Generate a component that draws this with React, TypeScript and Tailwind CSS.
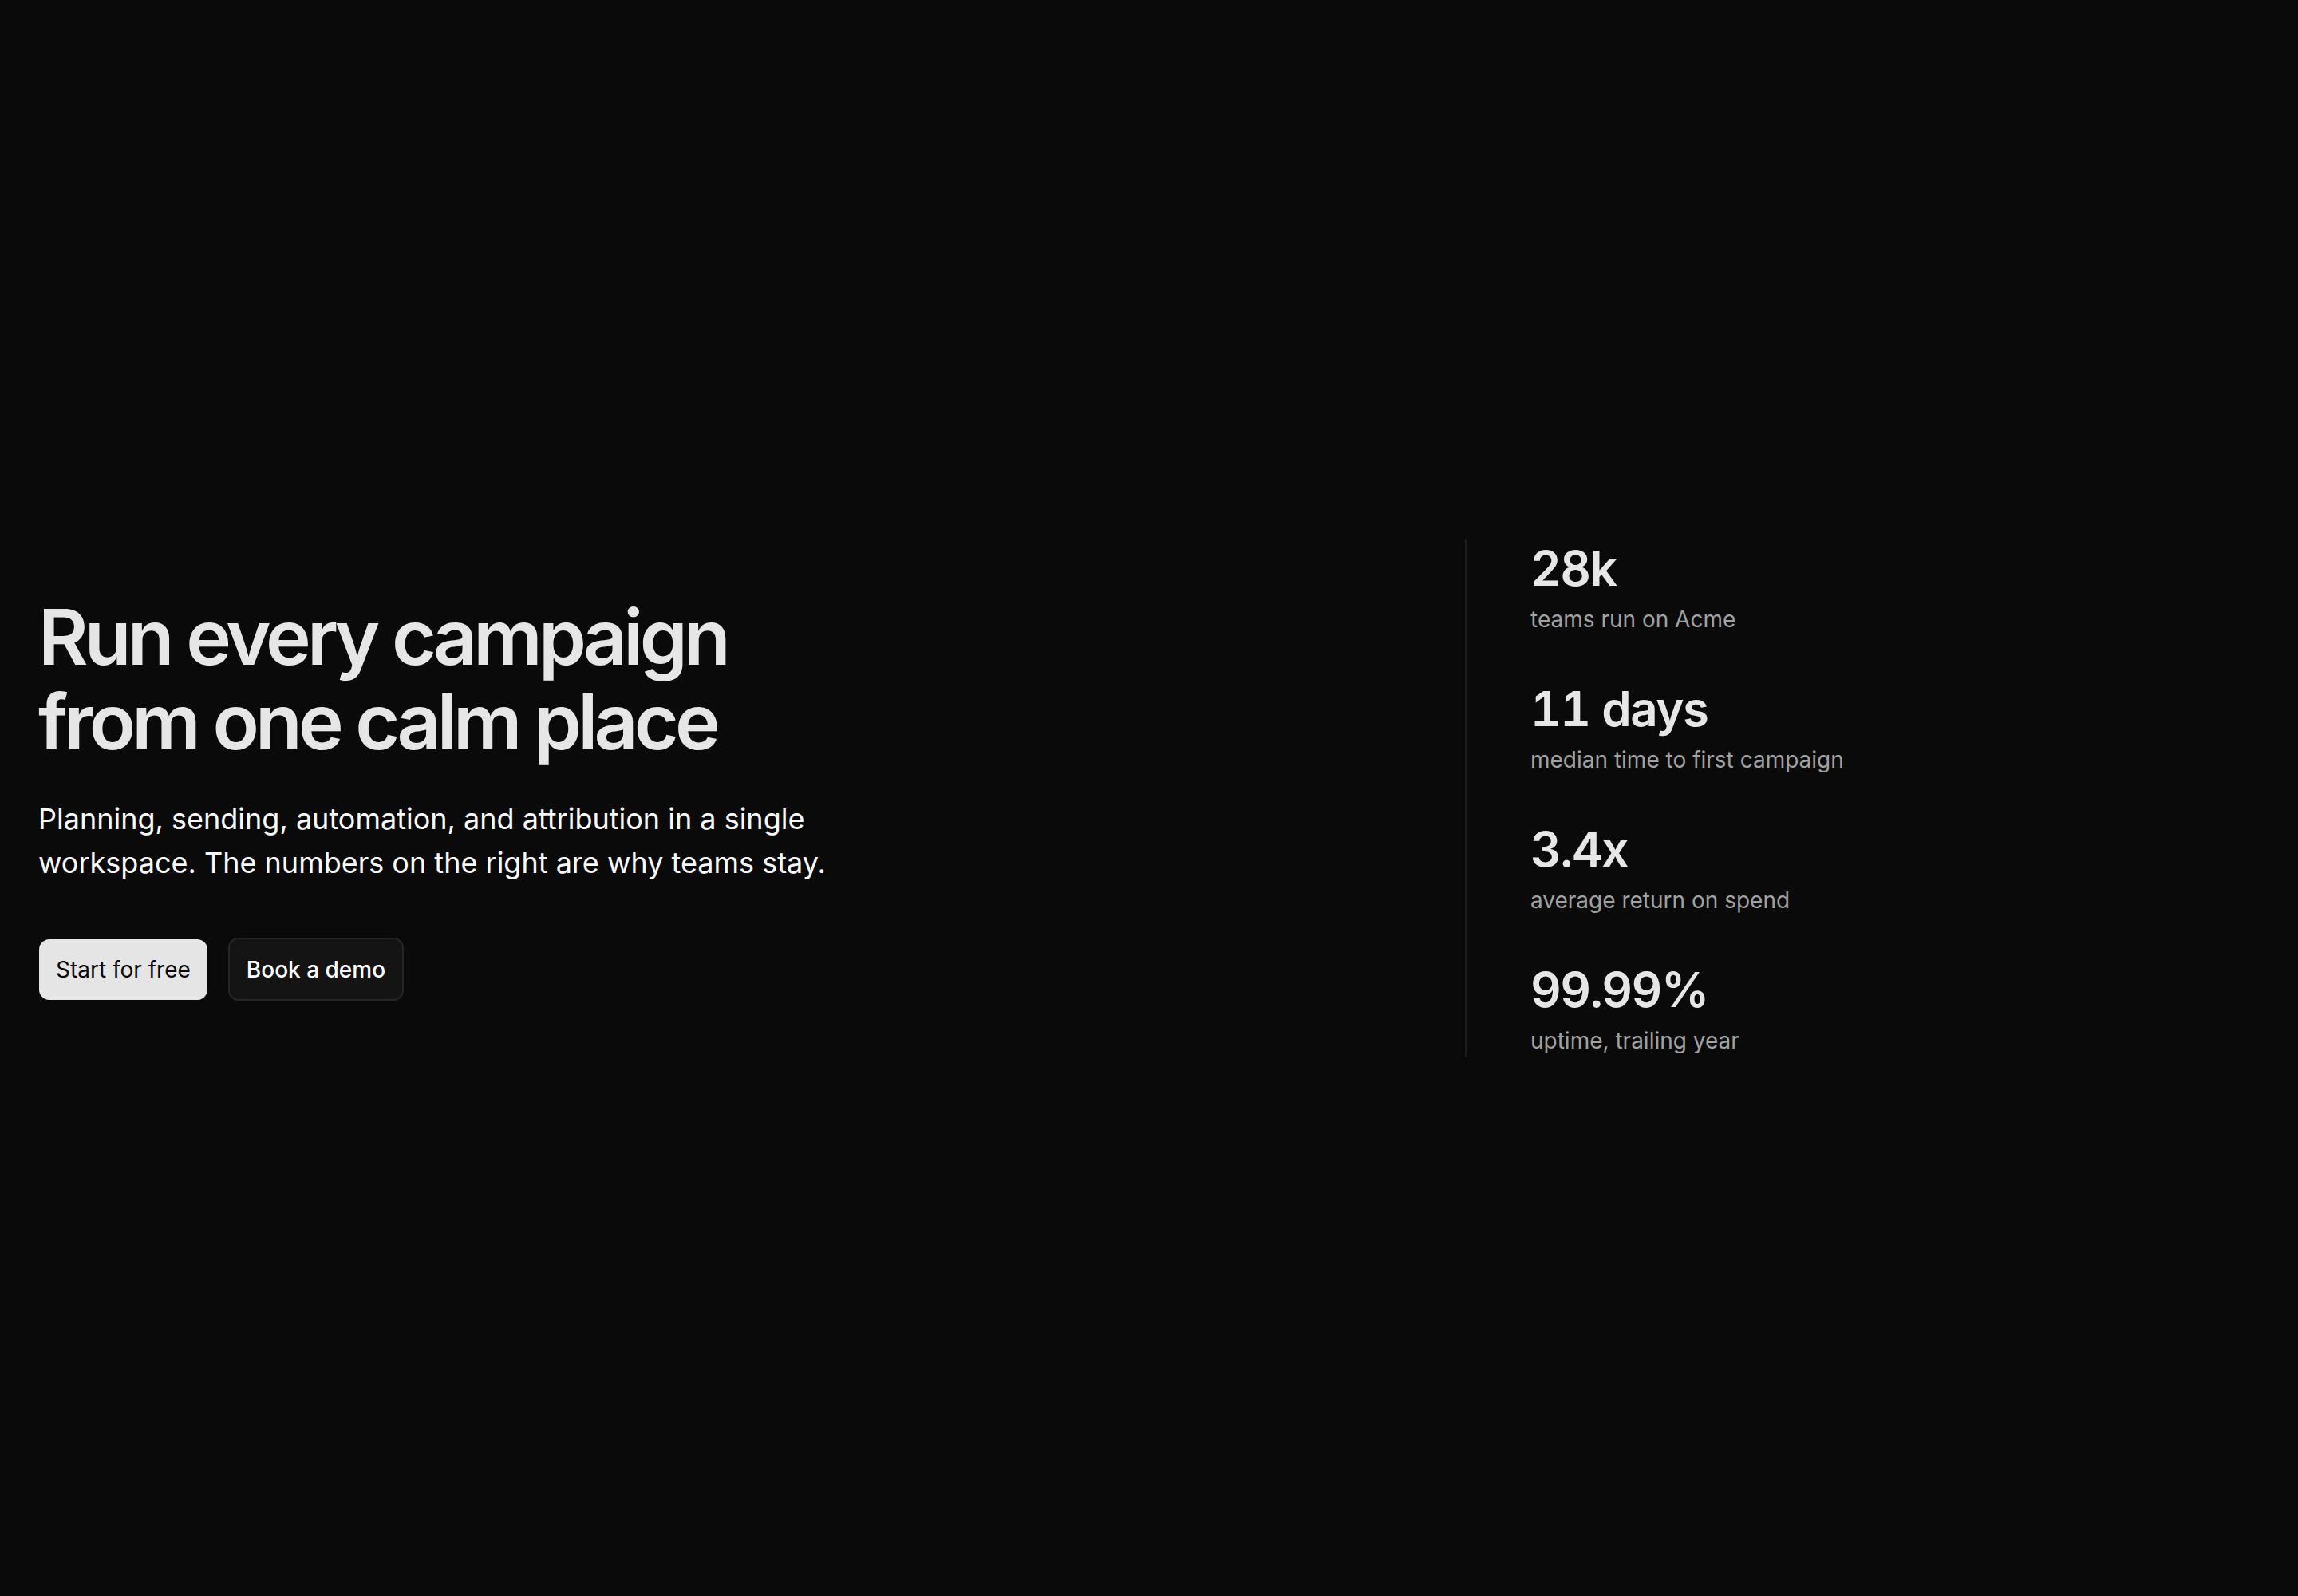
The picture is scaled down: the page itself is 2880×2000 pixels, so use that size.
import React from 'react'

const stats = [
  { value: '28k', label: 'teams run on Acme' },
  { value: '11 days', label: 'median time to first campaign' },
  { value: '3.4x', label: 'average return on spend' },
  { value: '99.99%', label: 'uptime, trailing year' },
]

export default function App() {
  return (
    <div
      className="min-h-screen w-full bg-[#0a0a0a] flex items-center px-12"
      style={{ fontFamily: 'Inter, "Noto Sans", sans-serif' }}
    >
      <div className="flex w-full items-center">
        {/* Hero copy */}
        <div className="flex-1 flex flex-col">
          <h1 className="text-[96px] leading-[1.1] font-semibold tracking-[-0.05em] text-[#e6e6e6]">
            Run every campaign
            <br />
            from one calm place
          </h1>
          <p className="mt-[42px] text-[36px] leading-[55px] text-[#fafafa] max-w-[1000px]">
            Planning, sending, automation, and attribution in a single workspace. The numbers on the right are why teams stay.
          </p>
          <div className="mt-[66px] flex items-center gap-[26px] pl-[1px]">
            <button className="h-[76px] px-[21px] rounded-[13px] bg-[#e5e5e5] text-[28px] text-[#0a0a0a]">
              Start for free
            </button>
            <button className="h-[79px] px-[21px] rounded-[13px] bg-[#141414] border-2 border-[#262626] text-[28px] font-medium text-white">
              Book a demo
            </button>
          </div>
        </div>

        {/* Stats column */}
        <div className="w-[996px] border-l-2 border-[#1c1c1f] pl-20 flex flex-col gap-[55px]">
          {stats.map((s) => (
            <div key={s.value} className="flex flex-col">
              <div className="text-[60px] leading-[72px] font-semibold tracking-[-0.025em] tabular-nums text-[#e6e6e6]">
                {s.value}
              </div>
              <div className="mt-[7px] text-[28px] leading-[42px] text-[#a1a1a1]">{s.label}</div>
            </div>
          ))}
        </div>
      </div>
    </div>
  )
}
